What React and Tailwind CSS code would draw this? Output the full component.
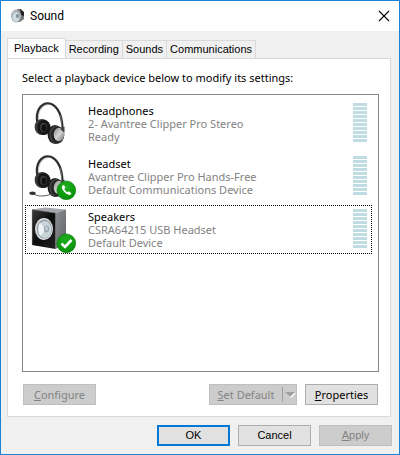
import { useState } from "react"

const tabs = ["Playback", "Recording", "Sounds", "Communications"]

const devices = [
  { name: "Headphones", detail: "2- Avantree Clipper Pro Stereo", status: "Ready", icon: "headphones" },
  {
    name: "Headset",
    detail: "Avantree Clipper Pro Hands-Free",
    status: "Default Communications Device",
    icon: "headset"
  },
  { name: "Speakers", detail: "CSRA64215 USB Headset", status: "Default Device", icon: "speakers" }
]

export default function App() {
  const [tab, setTab] = useState("Playback")
  const [selected, setSelected] = useState("Speakers")

  return (
    <div className="flex min-h-screen flex-col border border-[#1883d7] bg-[#f0f0f0] font-['Noto_Sans',sans-serif] text-[11px] leading-[13px] text-black">
      <header className="flex h-[30px] items-center bg-white pl-[9px] pr-2">
        <SoundIcon />
        <h1 className="ml-1 flex-1 font-['Roboto',sans-serif] text-xs">Sound</h1>
        <button aria-label="Close" className="p-px">
          <svg viewBox="0 0 12 12" className="size-3" fill="none" stroke="#000" strokeWidth="1.1">
            <path d="M1 1 11 11M11 1 1 11" />
          </svg>
        </button>
      </header>

      <main className="flex flex-1 flex-col px-[6px] pb-2 pt-[7px]">
        <div role="tablist" className="flex items-end font-['Liberation_Sans',sans-serif]">
          {tabs.map((name) => (
            <Tab key={name} name={name} active={name === tab} onClick={() => setTab(name)} />
          ))}
        </div>

        <section className="mr-[2px] flex flex-1 flex-col border border-[#d9d9d9] bg-white px-[14px] pb-[11px] pt-3">
          <p>Select a playback device below to modify its settings:</p>

          <ul role="listbox" className="mr-[-3px] mt-[10px] flex flex-1 flex-col gap-1 border border-[#828790] pl-[2px] pr-[6px] pt-1">
            {devices.map((device) => (
              <Device
                key={device.name}
                device={device}
                selected={device.name === selected}
                onClick={() => setSelected(device.name)}
              />
            ))}
          </ul>

          <div className="mr-[-2px] mt-3 flex gap-2 pl-px">
            <DialogButton disabled>
              <u>C</u>onfigure
            </DialogButton>
            <div className="ml-auto flex h-[21px] w-[88px] border border-[#bfbfbf] bg-[#ccc] text-[#838383]">
              <button disabled className="flex-1">
                <u>S</u>et Default
              </button>
              <button disabled aria-label="More defaults" className="my-[2px] w-[14px] border-l border-[#a0a0a0]">
                <svg viewBox="0 0 13 15" className="h-[15px] w-[13px]">
                  <path d="M3 6h10L8 11z" fill="#fff" />
                  <path d="M2 5h10L7 10z" fill="#a0a0a0" />
                </svg>
              </button>
            </div>
            <DialogButton>
              <u>P</u>roperties
            </DialogButton>
          </div>
        </section>

        <footer className="mr-px mt-2 flex justify-end gap-2 font-['Liberation_Sans',sans-serif]">
          <DialogButton primary>OK</DialogButton>
          <DialogButton>Cancel</DialogButton>
          <DialogButton disabled>
            <u>A</u>pply
          </DialogButton>
        </footer>
      </main>
    </div>
  )
}

function Tab({ name, active, onClick }) {
  return (
    <button
      role="tab"
      aria-selected={active}
      onClick={onClick}
      className={
        active
          ? "-mb-px h-[21px] border border-b-0 border-[#d9d9d9] bg-white px-[6px] pb-[2px]"
          : "h-[18px] border border-b-0 border-l-0 border-[#d9d9d9] px-[3px]"
      }
    >
      {name}
    </button>
  )
}

function Device({ device, selected, onClick }) {
  return (
    <li
      role="option"
      aria-selected={selected}
      onClick={onClick}
      className={`flex h-[49px] border border-dotted pl-[2px] pr-1 ${selected ? "border-black" : "border-transparent"}`}
    >
      <DeviceIcon type={device.icon} />
      <div className="ml-3 mt-1 flex-1 text-[#838383]">
        <p className="text-black">{device.name}</p>
        <p>{device.detail}</p>
        <p>{device.status}</p>
      </div>
      <div className="mt-[3px] flex w-[14px] flex-col gap-px">
        {Array.from({ length: 10 }, (_, i) => (
          <span key={i} className="h-[3px] bg-[#c1dce3]" />
        ))}
      </div>
    </li>
  )
}

function DialogButton({ primary, disabled, children }) {
  const tone = disabled
    ? "border border-[#bfbfbf] bg-[#ccc] text-[#838383]"
    : primary
      ? "border-2 border-[#0078d7] bg-[#e1e1e1]"
      : "border border-[#adadad] bg-[#e1e1e1]"

  return (
    <button disabled={disabled} className={`h-[21px] w-[73px] ${tone}`}>
      {children}
    </button>
  )
}

function SoundIcon() {
  return (
    <svg viewBox="0 0 16 16" className="size-4">
      <path d="M6 1 11 1 14 5 14 11 10 14 6 14z" fill="#777" />
      <path d="M10 1 14 4 14 8 11 7z" fill="#222" />
      <ellipse cx="6" cy="8" rx="5" ry="6.5" fill="#a5aeb2" />
      <ellipse cx="6" cy="9" rx="3.6" ry="4.8" fill="#cddae0" />
      <ellipse cx="7.5" cy="8" rx="1.5" ry="2" fill="#7f8c92" />
      <path d="M2 5C3 2 5 1.500 7 1.500" fill="none" stroke="#ddd" strokeWidth="1" />
    </svg>
  )
}

function DeviceIcon({ type }) {
  return (
    <svg viewBox="0 0 48 48" className="-mt-px size-12 shrink-0">
      <defs>
        <linearGradient id="metal" x1="0" y1="0" x2="1" y2="1">
          <stop offset="0" stopColor="#8a8a8a" />
          <stop offset="0.5" stopColor="#d4d4d4" />
          <stop offset="1" stopColor="#666" />
        </linearGradient>
        <linearGradient id="side" x1="0" y1="0" x2="1" y2="1">
          <stop offset="0" stopColor="#8b8e92" />
          <stop offset="1" stopColor="#606367" />
        </linearGradient>
        <linearGradient id="face" x1="0" y1="0" x2="1" y2="1">
          <stop offset="0" stopColor="#3c3c3c" />
          <stop offset="0.5" stopColor="#0c0c0c" />
          <stop offset="1" stopColor="#222" />
        </linearGradient>
        <radialGradient id="badge" cx="0.5" cy="0.3" r="0.7">
          <stop offset="0" stopColor="#1fae1f" />
          <stop offset="1" stopColor="#079007" />
        </radialGradient>
      </defs>
      {type === "speakers" ? <Speaker /> : <Headphones mic={type === "headset"} />}
      {type !== "headphones" && (
        <circle cx="38.3" cy="38.3" r="9.4" fill="url(#badge)" stroke="#087808" strokeWidth="0.6" />
      )}
      {type === "speakers" && <path d="M33.500 38.500 37 42 43.500 35" fill="none" stroke="#fff" strokeWidth="2.6" />}
      {type === "headset" && (
        <path
          d="M34.500 33.500c-1 1-1 3 1 5.500s5 4.500 7 3.700l1-1.400-2.800-2-1.400 1c-1.500-.8-2.400-1.800-3-3.200l1.200-1.300-1.500-2.800z"
          fill="#fff"
        />
      )}
    </svg>
  )
}

function Headphones({ mic }) {
  return (
    <g>
      <path d="M9.500 24C7 12 13 4.300 20 4.300S34 13 34.500 29" fill="none" stroke="#2e2e2e" strokeWidth="2.3" />
      <path d="M10.500 22C9.500 13 14 6.500 19.500 5.800" fill="none" stroke="#aaa" strokeWidth="0.6" />
      <path d="M32 16C33.500 20 33.500 24 33.500 28" fill="none" stroke="#888" strokeWidth="0.7" />
      <ellipse cx="14" cy="28" rx="7.4" ry="8" fill="#3a3a3a" />
      <ellipse cx="16" cy="28.5" rx="6.6" ry="7.6" fill="#161616" />
      <ellipse cx="15.5" cy="28.5" rx="3.6" ry="4.8" fill="#3d3d3d" />
      <ellipse cx="16" cy="29" rx="2.4" ry="3.4" fill="#111" />
      <ellipse cx="27" cy="35.500" rx="7.4" ry="9.5" fill="#1c1c1c" />
      <ellipse cx="28.5" cy="35.8" rx="7.2" ry="9" fill="#484848" />
      <ellipse cx="29.5" cy="36" rx="6.8" ry="8.5" fill="#262626" />
      <ellipse cx="31" cy="35.5" rx="5.3" ry="6.8" fill="url(#metal)" />
      <path d="M32 30 36.500 27.500V34z" fill="#444" />
      {mic && (
        <g>
          <path d="M5 41.500C9 44.500 15 45 24 42" fill="none" stroke="#555" strokeWidth="1" />
          <ellipse cx="4.5" cy="41.3" rx="3.2" ry="1.7" fill="#333" />
        </g>
      )}
    </g>
  )
}

function Speaker() {
  return (
    <g>
      <path d="M4 4.500 17 2.500 38 4.500 27.500 8z" fill="#a4a7ab" />
      <path d="M27.500 8 38 4.500V38L27.500 44z" fill="url(#side)" />
      <path d="M4 4.500 27.500 8V44L4 40z" fill="url(#face)" />
      <path d="M4.300 40V4.700L27.500 8" fill="none" stroke="#666" strokeWidth="0.6" />
      <ellipse cx="16" cy="24" rx="9" ry="11" fill="#dcdfe1" />
      <ellipse cx="16.3" cy="24" rx="7.6" ry="9.5" fill="#8f9ca3" />
      <ellipse cx="16.7" cy="24.5" rx="6.6" ry="8.4" fill="#cbd6dc" />
      <path d="M17 24.500 12 17.500C9.500 21 9.800 28 12.500 31z" fill="#eef3f5" />
      <ellipse cx="18.5" cy="24" rx="2.6" ry="3.6" fill="#97a6ae" />
      <ellipse cx="18.5" cy="23.5" rx="1.5" ry="2.2" fill="#c3d0d6" />
    </g>
  )
}
